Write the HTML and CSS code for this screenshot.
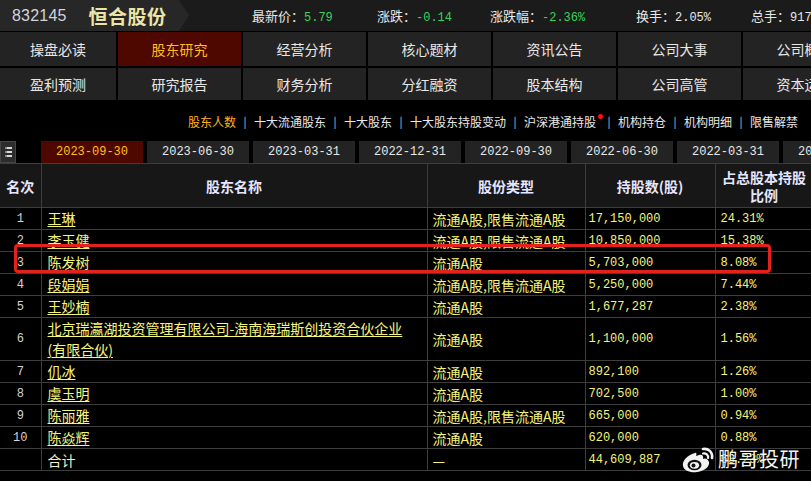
FILE: index.html
```html
<!DOCTYPE html>
<html lang="zh-CN">
<head>
<meta charset="utf-8">
<title>恒合股份 股东研究</title>
<link rel="stylesheet" href="styles.css">
</head>
<body>
<div class="page">
  <header class="topbar">
    <div class="stock">
      <span class="code">832145</span>
      <span class="sname">恒合股份</span>
    </div>
    <div class="quotes">
      <div class="quote q1">最新价：<span class="val down">5.79</span></div>
      <div class="quote q2">涨跌：<span class="val down">-0.14</span></div>
      <div class="quote q3">涨跌幅：<span class="val down">-2.36%</span></div>
      <div class="quote q4">换手：<span class="val">2.05%</span></div>
      <div class="quote q5">总手：<span class="val">917</span></div>
    </div>
  </header>

  <nav class="menu">
    <div class="mi">操盘必读</div>
    <div class="mi active">股东研究</div>
    <div class="mi">经营分析</div>
    <div class="mi">核心题材</div>
    <div class="mi">资讯公告</div>
    <div class="mi">公司大事</div>
    <div class="mi">公司概况</div>
    <div class="mi">盈利预测</div>
    <div class="mi">研究报告</div>
    <div class="mi">财务分析</div>
    <div class="mi">分红融资</div>
    <div class="mi">股本结构</div>
    <div class="mi">公司高管</div>
    <div class="mi">资本运作</div>
  </nav>

  <div class="sublinks">
    <span class="sl current">股东人数</span><span class="sep">|</span>
    <span class="sl">十大流通股东</span><span class="sep">|</span>
    <span class="sl">十大股东</span><span class="sep">|</span>
    <span class="sl">十大股东持股变动</span><span class="sep">|</span>
    <span class="sl">沪深港通持股<i class="dot"></i></span><span class="sep">|</span>
    <span class="sl">机构持仓</span><span class="sep">|</span>
    <span class="sl">机构明细</span><span class="sep">|</span>
    <span class="sl">限售解禁</span>
  </div>

  <div class="tabs">
    <div class="listicon"><i></i><i></i><i></i></div>
    <div class="tab active">2023-09-30</div>
    <div class="tab">2023-06-30</div>
    <div class="tab">2023-03-31</div>
    <div class="tab">2022-12-31</div>
    <div class="tab">2022-09-30</div>
    <div class="tab">2022-06-30</div>
    <div class="tab">2022-03-31</div>
    <div class="tab">2021-12-31</div>
  </div>

  <table class="holders">
    <colgroup>
      <col class="c-rank"><col class="c-name"><col class="c-type"><col class="c-num"><col class="c-pct">
    </colgroup>
    <thead>
      <tr><th>名次</th><th>股东名称</th><th>股份类型</th><th>持股数(股)</th><th>占总股本持股比例</th></tr>
    </thead>
    <tbody>
      <tr><td class="rank">1</td><td class="name"><a>王琳</a></td><td class="type">流通A股,限售流通A股</td><td class="num">17,150,000</td><td class="num pct">24.31%</td></tr>
      <tr><td class="rank">2</td><td class="name"><a>李玉健</a></td><td class="type">流通A股,限售流通A股</td><td class="num">10,850,000</td><td class="num pct">15.38%</td></tr>
      <tr><td class="rank">3</td><td class="name"><a>陈发树</a></td><td class="type">流通A股</td><td class="num">5,703,000</td><td class="num pct">8.08%</td></tr>
      <tr><td class="rank">4</td><td class="name"><a>段娟娟</a></td><td class="type">流通A股,限售流通A股</td><td class="num">5,250,000</td><td class="num pct">7.44%</td></tr>
      <tr><td class="rank">5</td><td class="name"><a>王妙楠</a></td><td class="type">流通A股</td><td class="num">1,677,287</td><td class="num pct">2.38%</td></tr>
      <tr class="tall"><td class="rank">6</td><td class="name"><a>北京瑞瀛湖投资管理有限公司-海南海瑞斯创投资合伙企业<br>(有限合伙)</a></td><td class="type">流通A股</td><td class="num">1,100,000</td><td class="num pct">1.56%</td></tr>
      <tr><td class="rank">7</td><td class="name"><a>仉冰</a></td><td class="type">流通A股</td><td class="num">892,100</td><td class="num pct">1.26%</td></tr>
      <tr><td class="rank">8</td><td class="name"><a>虞玉明</a></td><td class="type">流通A股</td><td class="num">702,500</td><td class="num pct">1.00%</td></tr>
      <tr><td class="rank">9</td><td class="name"><a>陈丽雅</a></td><td class="type">流通A股,限售流通A股</td><td class="num">665,000</td><td class="num pct">0.94%</td></tr>
      <tr><td class="rank">10</td><td class="name"><a>陈焱辉</a></td><td class="type">流通A股</td><td class="num">620,000</td><td class="num pct">0.88%</td></tr>
      <tr><td class="rank"></td><td class="name total">合计</td><td class="type">—</td><td class="num">44,609,887</td><td class="num pct">63.23%</td></tr>
    </tbody>
  </table>

  <div class="highlight"></div>

  <div class="watermark">
    <svg class="weibo" viewBox="0 0 34 28" width="34" height="28" aria-hidden="true">
      <path d="M14 8 C6 10 1 16 2 21 C3 26 10 28 16 27 C24 26 29 21 28 17 C27 13 23 13 22 14 C23 11 21 9 18 10 L15 11 C16 8 15 7 14 8 Z" fill="#f2f2f2"/>
      <ellipse cx="13.5" cy="20" rx="7" ry="5.2" fill="#111"/>
      <ellipse cx="13.5" cy="20.3" rx="4.6" ry="3.4" fill="#f2f2f2"/>
      <circle cx="12.5" cy="20.6" r="2" fill="#111"/>
      <path d="M22 4 C27 3 32 7 31 13" fill="none" stroke="#f2f2f2" stroke-width="2.6" stroke-linecap="round"/>
      <path d="M22 8.5 C25 8 27.5 10 27 13" fill="none" stroke="#f2f2f2" stroke-width="2.2" stroke-linecap="round"/>
    </svg>
    <span class="wm-text">鹏哥投研</span>
  </div>
</div>
</body>
</html>
```

FILE: styles.css
```css
* { box-sizing: border-box; }

html, body {
  margin: 0;
  padding: 0;
  background: #000;
}

body {
  width: 811px;
  height: 481px;
  overflow: hidden;
  font-family: "Noto Sans CJK SC", "Noto Sans", sans-serif;
  color: #e6e6e6;
}

.page {
  position: relative;
  width: 811px;
  height: 481px;
  overflow: hidden;
}

/* ---------- top bar ---------- */
.topbar {
  display: flex;
  align-items: center;
  height: 31px;
  background: #1b1b1b;
  white-space: nowrap;
}

.stock {
  display: flex;
  align-items: center;
  width: 189px;
  height: 31px;
  padding-left: 12px;
  background: #272727;
  clip-path: polygon(0 0, 179px 0, 189px 50%, 179px 100%, 0 100%);
  flex: none;
}

.code {
  font-family: "Liberation Sans", sans-serif;
  font-size: 16px;
  color: #d2d2dc;
  letter-spacing: 0.2px;
}

.sname {
  margin-left: 22px;
  font-size: 19px;
  font-weight: bold;
  color: #ece6a6;
  letter-spacing: 0.5px;
}

.quotes {
  display: flex;
  align-items: center;
  padding-left: 63px;
}

.quote {
  flex: none;
  font-size: 13px;
  color: #e8e8e8;
}

.q1 { width: 125px; }
.q2 { width: 113px; }
.q3 { width: 146px; }
.q4 { width: 115px; }

.val {
  font-family: "Liberation Mono", monospace;
  font-size: 12px;
  color: #e8e8e8;
}

.val.down { color: #3ad25a; }

/* ---------- menu ---------- */
.menu {
  display: grid;
  grid-template-columns: 116px repeat(6, 123px);
  grid-template-rows: 34px 32px;
  column-gap: 2px;
  row-gap: 2px;
  margin-top: 1px;
  width: 870px;
}

.mi {
  display: flex;
  align-items: center;
  justify-content: center;
  background: #232323;
  font-size: 14px;
  color: #e8e8e8;
  white-space: nowrap;
}

.mi.active {
  background: #4e0800;
  color: #ffbf1a;
}

/* ---------- sub links ---------- */
.sublinks {
  display: flex;
  align-items: center;
  justify-content: flex-end;
  height: 41px;
  padding-right: 13px;
  padding-top: 1px;
  font-size: 12px;
  color: #e8e8e8;
  white-space: nowrap;
}

.sl { position: relative; }
.sl.current { color: #ffb21a; }

.sep {
  margin: 0 7.5px;
  color: #cfcfcf;
  font-size: 11px;
}

.dot {
  position: absolute;
  right: -7px;
  top: 1px;
  width: 5px;
  height: 5px;
  border-radius: 50%;
  background: #ff1010;
}

.sl:has(.dot) { margin-right: 4px; }

/* ---------- date tabs ---------- */
.tabs {
  display: flex;
  align-items: stretch;
  height: 22px;
  gap: 4px;
  white-space: nowrap;
}

.listicon {
  display: flex;
  flex-direction: column;
  justify-content: center;
  gap: 2px;
  flex: none;
  width: 16px;
  margin-right: 21px;
  padding: 0 3px 0 4px;
  background: #2c2c2c;
  border: 1px solid #454545;
}

.listicon i {
  display: block;
  height: 2px;
  background: #d8d8d8;
  border-left: 2px solid #8a8a8a;
}

.tab {
  display: flex;
  align-items: center;
  justify-content: center;
  flex: none;
  width: 102px;
  background: #232323;
  font-family: "Liberation Mono", monospace;
  font-size: 12px;
  color: #e8e8e8;
}

.tab.active {
  background: #4e0800;
  color: #ffbf1a;
}

/* ---------- table ---------- */
.holders {
  width: 813px;
  table-layout: fixed;
  border-collapse: collapse;
}

.c-rank { width: 41px; }
.c-name { width: 386px; }
.c-type { width: 158px; }
.c-num  { width: 130px; }
.c-pct  { width: 98px; }

.holders th,
.holders td {
  border: 1px solid #3d3d3d;
  padding: 0;
  white-space: nowrap;
}

.holders tr > :first-child { border-left: none; }

.holders th {
  height: 44px;
  background: #171717;
  font-size: 14px;
  font-weight: bold;
  color: #e6e6ff;
  line-height: 18px;
  white-space: normal;
  padding: 0 4px;
}

.holders th:first-child { padding: 0; }

.holders td {
  height: 22px;
  line-height: 20px;
  font-size: 14px;
  color: #f4f47c;
  vertical-align: middle;
}

.holders tr.tall td { height: 43px; }

.rank {
  text-align: center;
  font-family: "Liberation Mono", monospace;
  font-size: 12px !important;
  color: #d4d4d4 !important;
}

.name { padding-left: 6px !important; }

.name a {
  color: #f6f67e;
  text-decoration: underline;
  text-decoration-thickness: 1px;
  text-underline-offset: 2px;
  line-height: 21px;
}

.name.total { color: #f2f2c8; }

.type { padding-left: 5px !important; }

.num {
  padding-left: 3px !important;
  font-family: "Liberation Mono", monospace;
  font-size: 12px !important;
}

.pct { padding-left: 5px !important; }

/* ---------- overlays ---------- */
.highlight {
  position: absolute;
  left: 14px;
  top: 244px;
  width: 757px;
  height: 29px;
  border: 3px solid #e3221c;
  border-radius: 4px;
}

.watermark {
  position: absolute;
  left: 681px;
  top: 444px;
  display: flex;
  align-items: center;
  gap: 3px;
}

.wm-text {
  font-size: 20px;
  color: #f4f4f4;
  letter-spacing: 0.5px;
  text-shadow: 0 0 2px rgba(0,0,0,0.6);
}
```
